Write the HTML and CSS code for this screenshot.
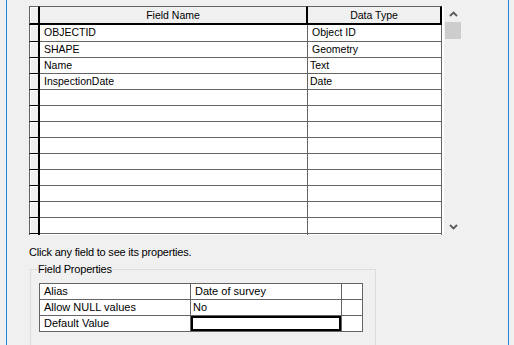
FILE: index.html
```html
<!DOCTYPE html>
<html lang="en">
<head>
  <meta charset="UTF-8">
  <title>Fields</title>
  <link rel="stylesheet" href="styles.css">
</head>
<body>
  <div class="window">
    <div class="grid-area">
      <div class="grid">
        <div class="row head">
          <div class="rh"></div>
          <div class="hc">Field Name</div>
          <div class="hc">Data Type</div>
        </div>
        <div class="row first">
          <div class="rh"></div>
          <div class="c">OBJECTID</div>
          <div class="c">Object ID</div>
        </div>
        <div class="row">
          <div class="rh"></div>
          <div class="c">SHAPE</div>
          <div class="c">Geometry</div>
        </div>
        <div class="row">
          <div class="rh"></div>
          <div class="c">Name</div>
          <div class="c tight">Text</div>
        </div>
        <div class="row">
          <div class="rh"></div>
          <div class="c">InspectionDate</div>
          <div class="c tight">Date</div>
        </div>
        <div class="row"><div class="rh"></div><div class="c"></div><div class="c"></div></div>
        <div class="row"><div class="rh"></div><div class="c"></div><div class="c"></div></div>
        <div class="row"><div class="rh"></div><div class="c"></div><div class="c"></div></div>
        <div class="row"><div class="rh"></div><div class="c"></div><div class="c"></div></div>
        <div class="row"><div class="rh"></div><div class="c"></div><div class="c"></div></div>
        <div class="row"><div class="rh"></div><div class="c"></div><div class="c"></div></div>
        <div class="row"><div class="rh"></div><div class="c"></div><div class="c"></div></div>
        <div class="row"><div class="rh"></div><div class="c"></div><div class="c"></div></div>
        <div class="row"><div class="rh"></div><div class="c"></div><div class="c"></div></div>
        <div class="row"><div class="rh"></div><div class="c"></div><div class="c"></div></div>
      </div>
      <div class="scrollbar">
        <div class="arrow">
          <svg width="9" height="6" viewBox="0 0 9 6"><path d="M1 5 L4.5 1.5 L8 5" fill="none" stroke="#5a5a5a" stroke-width="1.8"/></svg>
        </div>
        <div class="thumb"></div>
        <div class="track"></div>
        <div class="arrow down">
          <svg width="9" height="6" viewBox="0 0 9 6"><path d="M1 1 L4.5 4.5 L8 1" fill="none" stroke="#5a5a5a" stroke-width="1.8"/></svg>
        </div>
      </div>
    </div>

    <p class="hint">Click any field to see its properties.</p>

    <fieldset class="props">
      <legend>Field Properties</legend>
      <div class="ptable">
        <div class="prow">
          <div class="pc">Alias</div>
          <div class="pc">Date of survey</div>
          <div class="pc"></div>
        </div>
        <div class="prow">
          <div class="pc">Allow NULL values</div>
          <div class="pc tight">No</div>
          <div class="pc"></div>
        </div>
        <div class="prow">
          <div class="pc">Default Value</div>
          <div class="pc edit"></div>
          <div class="pc"></div>
        </div>
      </div>
    </fieldset>
  </div>
</body>
</html>
```

FILE: styles.css
```css
* {
  box-sizing: border-box;
}

body {
  margin: 0;
  background-color: #f0f0f0;
  font-family: "Liberation Sans", Arial, sans-serif;
  color: #000;
  overflow: hidden;
}

.window {
  margin-left: 6px;
  width: 503px;
  height: 345px;
  padding: 6px 0 0 22px;
  border-left: 1px solid #1f86d9;
  border-right: 1px solid #1f86d9;
  overflow: hidden;
}

.grid-area {
  display: flex;
  height: 229px;
}

.grid {
  width: 415px;
  height: 229px;
  overflow: hidden;
  background: #fff;
}

.row {
  display: grid;
  grid-template-columns: 11px 268px 134px;
  height: 16px;
  font-size: 10.5px;
}

.row.first {
  height: 17px;
}

.row.head {
  height: 19px;
}

.row > div {
  border-bottom: 1px solid #646464;
  border-right: 1px solid #646464;
  white-space: nowrap;
  overflow: hidden;
}

.row > div:first-child {
  border-left: 1px solid #646464;
}

.row .rh {
  background: #f0f0f0;
  border-right: 2px solid #000;
  border-bottom-color: #000;
  box-shadow: inset 1px 1px 0 #fff;
}

.row.head > div {
  border-top: 1px solid #646464;
  border-bottom: 2px solid #000;
}

.hc {
  background: #f0f0f0;
  text-align: center;
  line-height: 16px;
  border-right: 2px solid #000 !important;
}

.c {
  padding-left: 4px;
  line-height: 15px;
}

.c.tight {
  padding-left: 2px;
}

.scrollbar {
  width: 17px;
  margin-left: 1px;
  display: flex;
  flex-direction: column;
}

.arrow {
  height: 16px;
  display: flex;
  align-items: center;
  justify-content: center;
}

.arrow.down {
  align-items: flex-start;
  padding-top: 5px;
}

.thumb {
  height: 17px;
  width: 16px;
  background: #cdcdcd;
}

.track {
  flex: 1;
}

.hint {
  margin: 10px 0 0 0;
  font-size: 11px;
  line-height: 14px;
  letter-spacing: -0.2px;
}

.props {
  margin: 3px 0 0 1px;
  width: 346px;
  height: 120px;
  padding: 7px 0 0 8px;
  border: 1px solid #dcdcdc;
}

.props legend {
  margin-left: -1px;
  padding: 0;
  font-size: 11px;
  line-height: 14px;
  letter-spacing: -0.2px;
}

.ptable {
  width: 324px;
  border-top: 1px solid #646464;
  border-left: 1px solid #646464;
  background: #fff;
}

.prow {
  display: grid;
  grid-template-columns: 151px 151px 21px;
  height: 16px;
  font-size: 11px;
}

.pc {
  border-right: 1px solid #646464;
  border-bottom: 1px solid #646464;
  padding-left: 4px;
  line-height: 15px;
  white-space: nowrap;
}

.pc.tight {
  padding-left: 2px;
}

.pc.edit {
  box-shadow: inset 0 0 0 2px #000;
}
```
